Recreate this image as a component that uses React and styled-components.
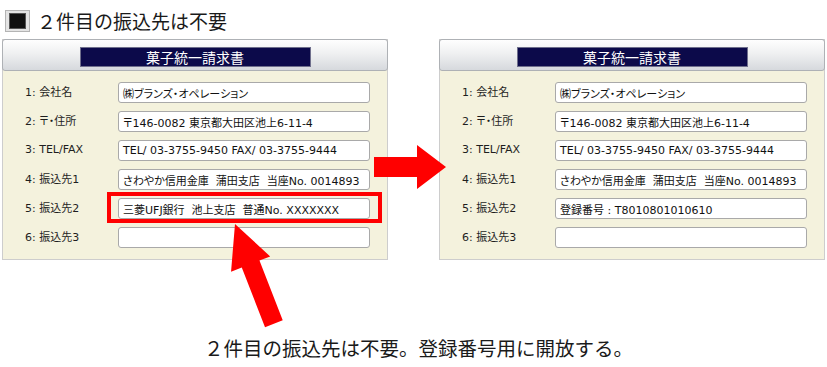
import React from 'react';
import styled, { createGlobalStyle } from 'styled-components';

const GlobalStyle = createGlobalStyle`
  body {
    margin: 0;
    background: #fff;
    font-family: "Noto Sans CJK JP", sans-serif;
  }
`;

const before = [
  '㈱ブランズ・オペレーション',
  '〒146-0082 東京都大田区池上6-11-4',
  'TEL/ 03-3755-9450 FAX/ 03-3755-9444',
  'さわやか信用金庫  蒲田支店  当座No. 0014893',
  '三菱UFJ銀行  池上支店  普通No. XXXXXXX',
  '',
];

const after = [
  before[0],
  before[1],
  before[2],
  before[3],
  '登録番号 : T8010801010610',
  '',
];

const labels = ['1: 会社名', '2: 〒・住所', '3: TEL/FAX', '4: 振込先1', '5: 振込先2', '6: 振込先3'];

const InvoicePanel = ({ values, highlight }) => (
  <Panel>
    <PanelHeader>
      <TitleBox>菓子統一請求書</TitleBox>
    </PanelHeader>
    <PanelBody>
      {labels.map((label, i) => (
        <Row key={label}>
          <Label>{label}</Label>
          <Field $highlight={highlight === i}>{values[i]}</Field>
        </Row>
      ))}
    </PanelBody>
  </Panel>
);

const App = () => {
  return (
    <Page>
      <GlobalStyle />
      <Heading>
        <Checkbox>
          <CheckMark />
        </Checkbox>
        <HeadingText>２件目の振込先は不要</HeadingText>
      </Heading>
      <Panels>
        <InvoicePanel values={before} highlight={4} />
        <InvoicePanel values={after} />
      </Panels>
      <Caption>２件目の振込先は不要。登録番号用に開放する。</Caption>
      <Arrows viewBox="0 0 827 367">
        <polygon points="374,157 417,157 417,145 446,167 417,189 417,177 374,177" fill="#ff0000" />
        <g transform="translate(235 224) rotate(-21.3)">
          <polygon points="0,0 21,43 9.5,43 9.5,107 -9.5,107 -9.5,43 -21,43" fill="#ff0000" />
        </g>
      </Arrows>
    </Page>
  );
};

export default App;

const Page = styled.div`
  position: relative;
  width: 827px;
  height: 367px;
  overflow: hidden;
`;

const Heading = styled.div`
  display: flex;
  align-items: center;
  height: 22px;
  padding: 10px 0 7px 5px;
`;

const Checkbox = styled.div`
  box-sizing: border-box;
  width: 25px;
  height: 22px;
  background: #e4e4e4;
  border: 1px solid #b4b4b4;
  display: flex;
  align-items: center;
  justify-content: center;
`;

const CheckMark = styled.div`
  width: 15px;
  height: 14px;
  background: #111;
  border: 1px solid #555;
`;

const HeadingText = styled.span`
  margin-left: 7px;
  font-size: 19px;
  line-height: 22px;
  color: #1a1a1a;
`;

const Panels = styled.div`
  display: flex;
  gap: 51px;
  padding-left: 2px;
`;

const Panel = styled.div`
  box-sizing: border-box;
  width: 386px;
  border: 1px solid #cdcdcd;
  background: #f4f2dd;
`;

const PanelHeader = styled.div`
  box-sizing: border-box;
  height: 32px;
  margin: -1px -1px 0;
  padding-top: 7px;
  border: 1px solid #aeb1b5;
  border-radius: 3px;
  background: linear-gradient(#fefefe, #eff0f1 45%, #d6d9dd);
`;

const TitleBox = styled.div`
  box-sizing: border-box;
  width: 231px;
  height: 20px;
  margin: 0 auto;
  background: #0c0a4a;
  border: 1px solid #6f6f8c;
  color: #fff;
  font-size: 14px;
  line-height: 18px;
  text-align: center;
`;

const PanelBody = styled.div`
  display: flex;
  flex-direction: column;
  gap: 8px;
  padding: 11px 0 11px 22px;
`;

const Row = styled.div`
  display: flex;
  align-items: center;
`;

const Label = styled.div`
  width: 93px;
  padding-bottom: 3px;
  font-family: "DejaVu Sans", "Noto Sans CJK JP", sans-serif;
  font-feature-settings: "palt";
  font-size: 11px;
  color: #1e1e1e;
`;

const Field = styled.div`
  position: relative;
  box-sizing: border-box;
  width: 252px;
  height: 21px;
  padding-left: 4px;
  display: flex;
  align-items: center;
  background: #fff;
  border: 1px solid #a9a9a9;
  border-radius: 3px;
  font-family: "DejaVu Sans", "Noto Sans CJK JP", sans-serif;
  font-feature-settings: "palt";
  font-size: 11px;
  color: #111;
  white-space: pre;

  ${({ $highlight }) =>
    $highlight &&
    `
    &::after {
      content: "";
      position: absolute;
      top: -7px;
      bottom: -5px;
      left: -12px;
      right: -13px;
      border: 4px solid #ff0000;
    }
  `}
`;

const Caption = styled.div`
  margin-top: 74px;
  padding-left: 10px;
  text-align: center;
  font-size: 19.5px;
  line-height: 27px;
  color: #1a1a1a;
`;

const Arrows = styled.svg`
  position: absolute;
  top: 0;
  left: 0;
  width: 827px;
  height: 367px;
  pointer-events: none;
`;
